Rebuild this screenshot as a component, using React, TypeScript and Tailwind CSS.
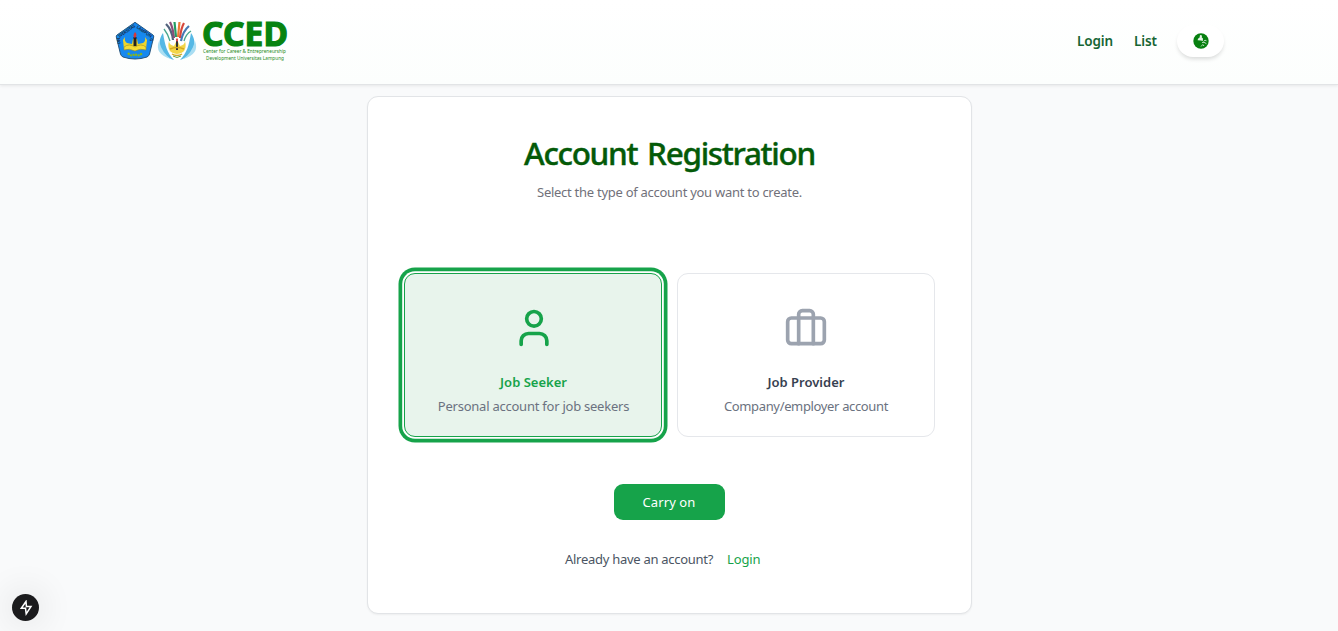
import React from "react";
import { Briefcase, User } from "lucide-react";

function Logo() {
  return (
    <svg width="173" height="44" viewBox="0 0 173 44" className="block overflow-visible" fontFamily="'Noto Sans', sans-serif">
      <defs>
        <path id="rim" d="M5.6 24 L4.8 17.6 L20 7 L35.2 17.6 L34.4 24" />
      </defs>
      <path d="M20 2.3 38 15Q39 16 38.7 17L34.5 34Q34 36 32 37 20 41 8 37 6 36 5.5 34L1.3 17Q1 16 2 15Z" fill="#1688ef" stroke="#25547d" strokeWidth="1" />
      <text fontSize="4.2" fontWeight="700" fill="#18324f"><textPath href="#rim" textLength="47">UNIVERSITAS LAMPUNG</textPath></text>
      <path d="M10 17q-1 4 2 6l5 1 1-5h4l1 5 5-1q3-2 2-6l2 3-1 9H9L8 20Z" fill="#eed52b" />
      <path d="M9 27q5-4 11 0 6-4 11 0v3q-6-2-11 1-6-3-11-1Z" fill="#f5dc35" stroke="#9c8d22" strokeWidth=".6" />
      <path d="M18.5 17h3v9h-3Z" fill="#222" />
      <path d="M20 12q3 3 0 6-3-2 0-6Z" fill="#d73737" />
      <path d="M13 33q3 4 7 1 4 3 7-1" fill="none" stroke="#87b51e" strokeWidth="2.2" strokeDasharray="2 .7" />
      <path d="M48 13C40 24 47 36 59 40 52 33 50 25 48 13Z" fill="#55b8e5" />
      <path d="M76 13C84 24 77 36 65 40 72 33 74 25 76 13Z" fill="#55b8e5" />
      <path d="M44 21q-5 13 12 18Q47 33 44 21ZM80 21q5 13-12 18Q77 33 80 21Z" fill="#a9def3" />
      <g fill="none" strokeWidth="2.2">
        <path d="M58 20Q57 10 51 4" stroke="#52627d" />
        <path d="M59 18Q58 8 55 2" stroke="#8b4e79" />
        <path d="M61 17 59.5 2" stroke="#249c63" />
        <path d="M63 17 64.5 2" stroke="#ed7b35" />
        <path d="M65 18Q66 8 69 3" stroke="#d7473b" />
        <path d="M66 21Q68 11 74 6" stroke="#4779b4" />
        <path d="M55 21Q53 14 49 9M69 21Q71 14 76 11" stroke="#45a58d" strokeWidth="1.3" />
      </g>
      <path d="M54 21q0 4 5 5l2-4h2l2 4q5-1 5-5 3 12-8 13-11-1-8-13Z" fill="#f2d547" />
      <path d="M61 21h2v9h-2Z" fill="#333" />
      <path d="M62 18q2 2 0 4-2-2 0-4Z" fill="#d33" />
      <path d="M55 29q7-3 14 0M57 34q5 3 10 0" fill="none" stroke="#d4a81f" strokeWidth="1.4" />
      <path d="M58 36q4 3 8 0" fill="none" stroke="#68a548" />
      <text x="87" y="25.7" fontSize="33.5" fontWeight="700" fill="#078310" stroke="#078310" strokeWidth="1.2" textLength="86" lengthAdjust="spacing">CCED</text>
      <text x="88" y="33" fontSize="6" fill="#1d8a22" textLength="83" lengthAdjust="spacingAndGlyphs">Center for Career &amp; Entrepreneurship</text>
      <text x="91" y="40.3" fontSize="6" fill="#1d8a22" textLength="78" lengthAdjust="spacingAndGlyphs">Development Universitas Lampung</text>
    </svg>
  );
}

function Globe() {
  return (
    <svg width="16" height="16" viewBox="0 0 16 16">
      <circle cx="8" cy="8" r="7.7" fill="#078010" />
      <path d="M7 2 9 2.6 8.8 4.4 10 5.5 9.8 8 8 7.6 4.6 7.2 5 5.8 6.6 4.6Z" fill="#e3f2e4" />
      <path d="M10.5 8.5 12 7.2 13.5 7.8M9 9.5 11 9.3 13.4 10.6M8 13.5 9.8 11.5 11 13" fill="none" stroke="#b8dcba" strokeWidth="1" />
    </svg>
  );
}

export default function App() {
  return (
    <div className="relative h-[631px] overflow-hidden bg-[#f9fafb] font-['Noto_Sans',sans-serif] text-[13px]">
      <header className="h-[85px] border-b border-[#e2e4e6] bg-linear-to-b from-white to-[#fcfefd] shadow-[0_1px_3px_rgba(0,0,0,0.08)]">
        <div className="mx-auto flex h-[83px] w-[1108px] items-center justify-between">
          <Logo />
          <nav className="-mr-px flex items-center text-[13.5px] font-semibold text-[#166534]">
            <a className="w-[57px] tracking-[-0.1px]">Login</a>
            <a className="w-[43px] tracking-[-0.1px]">List</a>
            <button className="mb-0.5 flex h-8 w-[47px] items-center justify-center rounded-full bg-white shadow-[0_3px_4px_-1px_rgba(0,0,0,0.15)]"><Globe /></button>
          </nav>
        </div>
      </header>
      <main className="mx-auto mt-[11px] flex h-[518px] w-[605px] flex-col items-center rounded-[11px] border border-[#e2e4e7] bg-white px-9 pt-9 shadow-[0_1px_2px_rgba(0,0,0,0.05)]">
        <h1 className="h-10 pl-px text-[31.5px] leading-10 font-medium tracking-[-1.32px] whitespace-nowrap text-[#045a08] [-webkit-text-stroke:0.4px_#045a08] [word-spacing:3px]">Account Registration</h1>
        <p className="mt-[9px] h-5 pl-px leading-5 tracking-[-0.27px] whitespace-nowrap text-[#71717a]">Select the type of account you want to create.</p>
        <div className="mt-[71px] grid w-[531px] grid-cols-2 gap-[15px]">
          <button className="flex h-[164px] flex-col items-center rounded-[11px] border border-[#16a34a] bg-[#e8f4ec] pt-8 pl-0.5 shadow-[0_0_0_1.8px_#fff,0_0_0_5.5px_#16a34a]">
            <User size={44} strokeWidth={2} className="text-[#16a34a]" />
            <span className="mt-5 h-6 text-[13px] leading-6 font-semibold whitespace-nowrap text-[#16a34a]">Job Seeker</span>
            <span className="h-6 leading-6 tracking-[-0.24px] whitespace-nowrap text-[#6b7280]">Personal account for job seekers</span>
          </button>
          <button className="flex h-[164px] flex-col items-center rounded-[11px] border border-[#e5e7eb] bg-white pt-8">
            <Briefcase size={44} strokeWidth={2} className="translate-y-px text-[#9ca3af]" />
            <span className="mt-5 h-6 pl-px text-[13px] leading-6 font-semibold whitespace-nowrap text-[#374151]">Job Provider</span>
            <span className="h-6 pl-px leading-6 tracking-[-0.35px] whitespace-nowrap text-[#6b7280]">Company/employer account</span>
          </button>
        </div>
        <button className="mt-[47px] h-9 w-[111px] shrink-0 rounded-[9px] bg-[#16a34a] pt-0.5 tracking-[0.1px] text-white">Carry on</button>
        <p className="mt-[29px] flex gap-[14px] self-start pl-[161.5px] leading-5 whitespace-nowrap text-[#4b5563]">
          <span className="tracking-[-0.28px]">Already have an account?</span><a className="tracking-[-0.15px] text-[#16a34a]">Login</a>
        </p>
      </main>
      <div className="absolute top-[594px] left-3 flex size-[27px] items-center justify-center rounded-full bg-[#1b1b1d] shadow-[0_0_36px_rgba(0,0,0,0.16)]">
        <svg width="13" height="16" viewBox="0 0 13 16" fill="none" stroke="white" strokeWidth="1.5" strokeLinejoin="miter" className="translate-x-px"><path d="M6 1.5 1.3 8.3H5.5L6.2 13.8 11 6.4 6.4 6.4Z" /></svg>
      </div>
    </div>
  );
}
